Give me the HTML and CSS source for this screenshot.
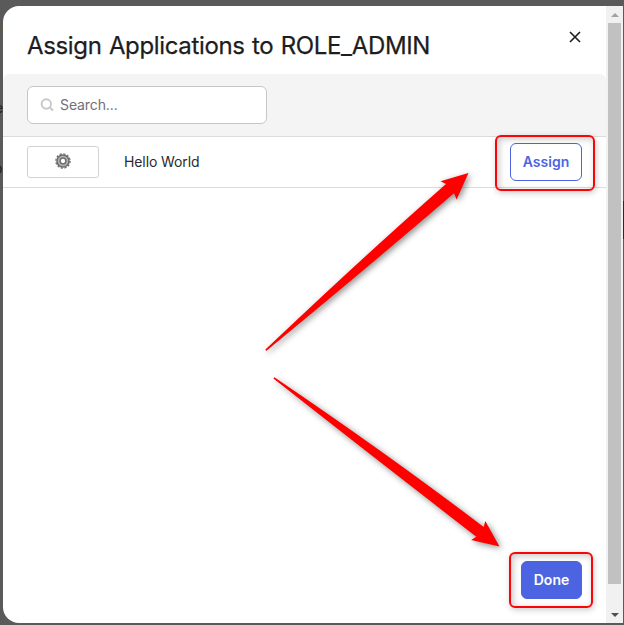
FILE: index.html
```html
<!DOCTYPE html>
<html lang="en">
<head>
<meta charset="utf-8">
<title>Assign Applications</title>
<link rel="stylesheet" href="styles.css">
</head>
<body>
<div class="backdrop" aria-hidden="true">
  <span class="peek peek-gold">c</span>
  <span class="peek peek-e">e</span>
  <span class="peek peek-o">o</span>
  <i class="peek-panel"></i>
</div>
<main class="modal">
  <div class="content">
    <header class="header">
      <h1 class="title">Assign Applications to ROLE_ADMIN</h1>
      <button class="close" aria-label="Close">
        <svg width="12" height="12" viewBox="0 0 12 12"><path d="M1 1 11 11M11 1 1 11"/></svg>
      </button>
    </header>
    <div class="toolbar">
      <label class="search">
        <svg width="14" height="14" viewBox="0 0 14 14"><circle cx="6.3" cy="6" r="4.7"/><path d="M9.8 9.5 13.1 12.5"/></svg>
        <input type="text" placeholder="Search...">
      </label>
    </div>
    <div class="row">
      <div class="logo">
        <svg width="16" height="16" viewBox="0 0 16 16">
          <circle class="teeth" cx="8" cy="8" r="7.1"/>
          <circle class="rim" cx="8" cy="8" r="6"/>
          <circle class="hub" cx="8" cy="8" r="2.9"/>
        </svg>
      </div>
      <span class="name">Hello World</span>
      <button class="btn assign">Assign</button>
    </div>
    <footer class="footer"><button class="btn done">Done</button></footer>
  </div>
  <div class="scrollbar">
    <i class="up"></i>
    <div class="thumb"></div>
    <i class="down"></i>
  </div>
</main>
<div class="mark mark-assign"></div>
<div class="mark mark-done"></div>
<svg class="arrows" width="624" height="625" viewBox="0 0 624 625">
  <path d="M265.4 349.6Q364 256 446 184L440.5 181.3 468.5 173 456.6 199.5 454 193.3Q374 262 266.2 351Z"/>
  <path d="M274.4 377.2Q392 457 483.7 527L485.3 521 499.5 546.5 471.2 540 476.3 536.7Q386 467 273.4 378.6Z"/>
</svg>
</body>
</html>
```
FILE: styles.css
```css
* { box-sizing: border-box; }
body {
  margin: 0;
  width: 624px;
  height: 625px;
  padding: 6px 1px 2px 3px;
  position: relative;
  overflow: hidden;
  background: #5a5a5a;
  font: 14px/20px Inter, "Liberation Sans", sans-serif;
  color: #1d1d21;
}
.backdrop { position: absolute; inset: 0; overflow: hidden; }
.peek { position: absolute; left: -5px; font-size: 14px; color: #222; }
.peek-gold { top: 17px; left: -6px; color: #66552f; }
.peek-e { top: 98px; }
.peek-o { top: 158px; left: -7px; font-size: 16px; }
.peek-panel { position: absolute; right: 0; top: 201px; width: 1px; height: 38px; background: #24263c; }
.modal {
  position: relative;
  display: flex;
  height: 617px;
  background: #fff;
  border-radius: 16px 0 0 16px;
  overflow: hidden;
}
.content { flex: 1; display: flex; flex-direction: column; }
.header {
  height: 68px;
  padding: 24px 25px 0 24px;
  display: flex;
  justify-content: space-between;
}
.title {
  margin: 0;
  font-size: 24px;
  line-height: 32px;
  font-weight: 400;
  letter-spacing: -0.35px;
  word-spacing: 1px;
  white-space: nowrap;
  -webkit-text-stroke: 0.25px #1d1d21;
}
.close { width: 12px; height: 12px; padding: 0; margin-top: 1px; border: 0; background: none; }
.close svg { display: block; }
.close path { stroke: #1d1d21; stroke-width: 1.6; fill: none; }
.toolbar {
  height: 63px;
  padding: 12px 24px;
  background: #f4f4f4;
  border-bottom: 1px solid #dcdcdc;
  border-radius: 6px 6px 0 0;
}
.search {
  display: flex;
  align-items: center;
  gap: 6px;
  width: 240px;
  height: 38px;
  padding: 0 12px;
  border: 1px solid #c6c6c8;
  border-radius: 6px;
  background: #fff;
}
.search svg { fill: none; stroke: #c8c8ca; stroke-width: 1.9; }
.search input {
  width: 180px;
  padding: 0;
  border: 0;
  outline: 0;
  font: inherit;
  letter-spacing: -0.1px;
  background: none;
}
.search input::placeholder { color: #707078; opacity: 1; }
.row {
  height: 51px;
  padding: 0 24px;
  display: flex;
  align-items: center;
  border-bottom: 1px solid #dcdcdc;
}
.logo {
  width: 72px;
  height: 32px;
  padding-bottom: 2px;
  display: flex;
  align-items: center;
  justify-content: center;
  border: 1px solid #d2d2d4;
  border-radius: 3px;
}
.logo circle { fill: none; }
.logo .teeth { stroke: #777; stroke-width: 1.4; stroke-dasharray: 2.2 1.52; }
.logo .rim { fill: #b5b5b5; stroke: #6d6d6d; stroke-width: 1.6; }
.logo .hub { fill: #fff; stroke: #707070; stroke-width: 1.5; }
.name { margin-left: 25px; flex: 1; letter-spacing: -0.1px; color: #2a2a30; }
.btn {
  height: 38px;
  padding: 0;
  border: 1px solid #4c64e1;
  border-radius: 6px;
  font: 600 14px/20px Inter, "Liberation Sans", sans-serif;
}
.assign { width: 72px; background: #fff; color: #4c64e1; }
.done { width: 61px; background: #4c64e1; color: #fff; }
.footer { margin-top: auto; padding: 0 24px 24px; display: flex; justify-content: flex-end; }
.scrollbar {
  width: 17px;
  padding: 7px 2px 6px;
  display: flex;
  flex-direction: column;
  align-items: center;
  background: #f1f1f1;
}
.up, .down { width: 0; height: 0; border: 4px solid transparent; }
.up { border-top: 0; border-bottom-color: #a3a3a3; }
.down { border-bottom: 0; border-top-color: #505050; margin-top: auto; }
.thumb { width: 13px; height: 561px; margin-top: 6px; background: #c1c1c1; }
.mark {
  position: absolute;
  border: 2px solid #f90508;
  border-radius: 6px;
  box-shadow: 1px 2px 6px rgba(0,0,0,.2), inset 2px 2px 7px rgba(0,0,0,.22);
}
.mark-assign { left: 494.5px; top: 134.5px; width: 100px; height: 56px; }
.mark-done { left: 508.5px; top: 551.5px; width: 84px; height: 56px; }
.arrows { position: absolute; left: 0; top: 0; filter: drop-shadow(2px 2px 3px rgba(0,0,0,.45)); }
.arrows path { fill: #f00; }
```
